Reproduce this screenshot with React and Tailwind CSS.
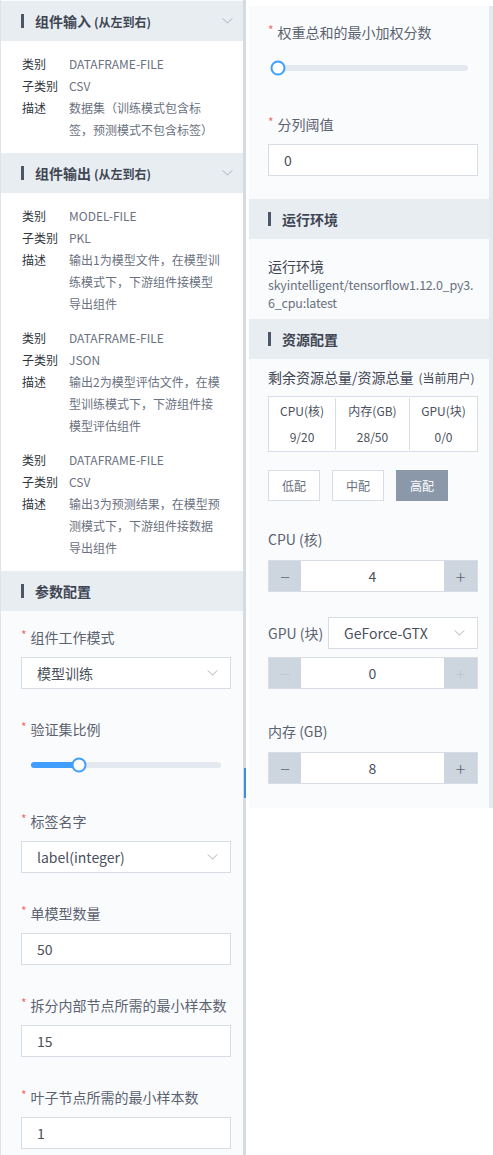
import React from "react";

// chevron used by collapsible headers and selects
function Chevron({ className = "" }) {
  return (
    <svg viewBox="0 0 12 7" className={`w-[11px] h-[6px] ${className}`} fill="none">
      <polyline points="0.5,0.5 6,6 11.5,0.5" stroke="#9aa3b1" strokeWidth="1" />
    </svg>
  );
}

function SectionHeader({ title, sub, chevron, left = "pl-5" }) {
  return (
    <div className={`h-10 bg-[#e8edf2] flex items-center pr-[10px] ${left}`}>
      <span className="w-[3px] h-[14px] bg-[#4b5667]" />
      <span className="ml-[11px] text-[14px] font-bold text-[#3f4653] leading-none">
        {title}
        {sub && <span className="text-[12px] ml-[3px]">{sub}</span>}
      </span>
      {chevron && <Chevron className="ml-auto" />}
    </div>
  );
}

function InfoGroup({ type, sub, desc }) {
  const rows = [
    ["类别", [type]],
    ["子类别", [sub]],
    ["描述", desc],
  ];
  return (
    <div className="text-[12px] leading-[22px]">
      {rows.map(([k, v]) => (
        <div key={k} className="flex">
          <span className="w-[47px] shrink-0 text-[#30353d]">{k}</span>
          <span className="text-[#6a7180]">
            {v.map((line, i) => (
              <div key={i}>{line}</div>
            ))}
          </span>
        </div>
      ))}
    </div>
  );
}

function Label({ children, required = true }) {
  return (
    <div className="h-5 flex items-center text-[14px] text-[#5b6270] mb-[10px]">
      {required && <span className="text-[#f56c6c] text-[12px] mr-[4px] -mt-[4px]">*</span>}
      {children}
    </div>
  );
}

function Select({ value, className = "" }) {
  return (
    <div className={`h-8 bg-white border border-[#d8dce5] flex items-center pl-[15px] pr-[12px] text-[14px] text-[#4a505c] ${className}`}>
      <span>{value}</span>
      <Chevron className="ml-auto" />
    </div>
  );
}

function Input({ value }) {
  return (
    <div className="h-8 bg-white border border-[#d8dce5] flex items-center pl-[15px] text-[14px] text-[#4a505c]">
      {value}
    </div>
  );
}

function Slider({ pct }) {
  return (
    <div className="h-8 flex items-center mx-[10px]">
      <div className="relative w-full h-[6px] rounded-full bg-[#e4e8ef]">
        <div className="absolute left-0 top-0 h-full rounded-full bg-[#409eff]" style={{ width: `${pct}%` }} />
        <div
          className="absolute top-1/2 w-[15px] h-[15px] -translate-x-1/2 -translate-y-1/2 rounded-full bg-white border-2 border-[#409eff]"
          style={{ left: `${pct}%` }}
        />
      </div>
    </div>
  );
}

function Stepper({ value, disabled }) {
  const ic = disabled ? "text-[#bcc5d0]" : "text-[#5d6573]";
  return (
    <div className="h-8 flex border border-[#d8dce5] text-[14px]">
      <div className={`w-8 bg-[#cdd5df] flex items-center justify-center text-[18px] font-light ${ic}`}>−</div>
      <div className="flex-1 bg-white flex items-center justify-center text-[#4a505c]">{value}</div>
      <div className={`w-[33px] bg-[#cdd5df] flex items-center justify-center text-[18px] font-light ${ic}`}>+</div>
    </div>
  );
}

export default function App() {
  return (
    <div className="h-[1155px] w-[493px] overflow-hidden bg-white flex font-['Noto_Sans_CJK_SC','Noto_Sans',sans-serif]">
      {/* left panel */}
      <div className="relative w-[246px] shrink-0 border-l border-[#dfe3ea] border-r-[3px] border-r-[#d6dbe3] bg-[#fafbfc] pt-[1px] bg-clip-padding">
        <div className="absolute -right-[3px] top-[768px] w-[2px] h-[30px] bg-[#3a8ee6]" />
        <SectionHeader title="组件输入" sub="(从左到右)" chevron />
        <div className="bg-white pl-[21px] pt-3 pb-3">
          <InfoGroup type="DATAFRAME-FILE" sub="CSV" desc={["数据集（训练模式包含标", "签，预测模式不包含标签）"]} />
        </div>
        <SectionHeader title="组件输出" sub="(从左到右)" chevron />
        <div className="bg-white pl-[21px] pt-3 pb-3 flex flex-col gap-3">
          <InfoGroup type="MODEL-FILE" sub="PKL" desc={["输出1为模型文件，在模型训", "练模式下，下游组件接模型", "导出组件"]} />
          <InfoGroup type="DATAFRAME-FILE" sub="JSON" desc={["输出2为模型评估文件，在模", "型训练模式下，下游组件接", "模型评估组件"]} />
          <InfoGroup type="DATAFRAME-FILE" sub="CSV" desc={["输出3为预测结果，在模型预", "测模式下，下游组件接数据", "导出组件"]} />
        </div>
        <SectionHeader title="参数配置" />
        <div className="pl-5 pr-3 pt-4 flex flex-col gap-[30px]">
          <div>
            <Label>组件工作模式</Label>
            <Select value="模型训练" />
          </div>
          <div>
            <Label>验证集比例</Label>
            <Slider pct={25} />
          </div>
          <div>
            <Label>标签名字</Label>
            <Select value="label(integer)" />
          </div>
          <div>
            <Label>单模型数量</Label>
            <Input value="50" />
          </div>
          <div>
            <Label>拆分内部节点所需的最小样本数</Label>
            <Input value="15" />
          </div>
          <div>
            <Label>叶子节点所需的最小样本数</Label>
            <Input value="1" />
          </div>
        </div>
      </div>

      {/* right panel */}
      <div className="flex-1 flex pl-[3px] pt-[6px]">
        <div className="w-[244px] h-[802px] bg-[#fafbfc] border-r-4 border-[#e6e9ee]">
          <div className="pl-[19px] pr-[11px] pt-4 pb-[23px]">
            <Label>权重总和的最小加权分数</Label>
            <Slider pct={0} />
            <div className="mt-[30px]">
              <Label>分列阈值</Label>
              <Input value="0" />
            </div>
          </div>
          <SectionHeader title="运行环境" left="pl-[19px]" />
          <div className="pl-[19px] pr-[8px] pt-[17px] pb-[7px]">
            <div className="text-[14px] text-[#3f4653] leading-5">运行环境</div>
            <div className="text-[12.5px] tracking-[-0.2px] text-[#6a7180] leading-[18px] whitespace-nowrap">
              <div>skyintelligent/tensorflow1.12.0_py3.</div>
              <div>6_cpu:latest</div>
            </div>
          </div>
          <SectionHeader title="资源配置" left="pl-[19px]" />
          <div className="pl-[19px] pr-[11px] pt-[8px]">
            <div className="text-[14px] text-[#3f4653] leading-5 whitespace-nowrap">
              剩余资源总量/资源总量<span className="text-[12px] ml-[5px]">(当前用户)</span>
            </div>
            <div className="mt-[8px] grid grid-cols-[67px_74px_1fr] border border-[#d8dce5] bg-white text-[12px] text-[#4a505c] text-center leading-[26px] py-[1px]">
              <div className="border-r border-[#d8dce5]"><div>CPU(核)</div><div>9/20</div></div>
              <div className="border-r border-[#d8dce5]"><div>内存(GB)</div><div>28/50</div></div>
              <div><div>GPU(块)</div><div>0/0</div></div>
            </div>
            <div className="mt-[18px] flex gap-3 text-[12px]">
              <div className="w-[52px] h-[31px] border border-[#d8dce5] bg-white flex items-center justify-center text-[#6a7180]">低配</div>
              <div className="w-[52px] h-[31px] border border-[#d8dce5] bg-white flex items-center justify-center text-[#6a7180]">中配</div>
              <div className="w-[52px] h-[31px] bg-[#8a98aa] flex items-center justify-center text-white">高配</div>
            </div>
            <div className="mt-[28px] text-[14px] text-[#5b6270] leading-5">CPU (核)</div>
            <div className="mt-[11px]"><Stepper value="4" /></div>
            <div className="mt-[25px] flex items-center">
              <span className="text-[14px] text-[#5b6270] w-[60px] shrink-0">GPU (块)</span>
              <Select value="GeForce-GTX" className="flex-1" />
            </div>
            <div className="mt-[8px]"><Stepper value="0" disabled /></div>
            <div className="mt-[32px] text-[14px] text-[#5b6270] leading-5">内存 (GB)</div>
            <div className="mt-[11px]"><Stepper value="8" /></div>
          </div>
        </div>
      </div>
    </div>
  );
}
